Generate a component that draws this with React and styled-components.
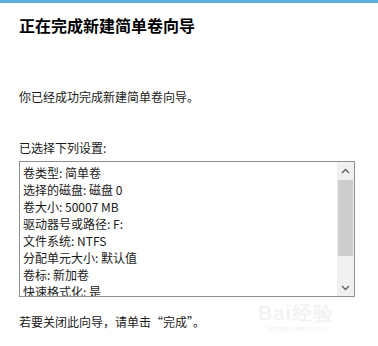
import React from "react";
import styled, { createGlobalStyle } from "styled-components";

const Global = createGlobalStyle`
  html, body { margin: 0; padding: 0; background: #fff; }
  body { font-family: "Noto Sans CJK SC", "Noto Sans", sans-serif; }
`;

const Page = styled.div`
  position: relative;
  width: 378px;
  height: 346px;
  border-top: 3px solid #5aaee2;
  box-sizing: border-box;
  padding: 12px 0 0 19px;
  overflow: hidden;
  color: #1a1a1a;
`;

const Title = styled.h1`
  margin: 0;
  font-size: 16px;
  line-height: 20px;
  font-weight: 700;
  color: #000;
`;

const Text = styled.p`
  margin: ${(p) => p.$top}px 0 0 0;
  font-size: 12px;
  line-height: 16px;
  color: #1a1a1a;
`;

const ListBox = styled.div`
  margin-top: 5px;
  width: 336px;
  height: 136px;
  box-sizing: border-box;
  border: 1px solid #8f8f8f;
  display: flex;
  background: #fff;
`;

const Lines = styled.div`
  flex: 1;
  padding: 2px 0 0 3px;
  overflow: hidden;
`;

const Line = styled.div`
  font-size: 12px;
  line-height: 17px;
  white-space: nowrap;
  color: #1a1a1a;
`;

const Scrollbar = styled.div`
  width: 17px;
  background: #f0f0f0;
  display: flex;
  flex-direction: column;
`;

const Arrow = styled.div`
  height: 17px;
  display: flex;
  align-items: center;
  justify-content: center;
`;

const Track = styled.div`
  flex: 1;
  padding: 1px 1px 0 1px;
`;

const Thumb = styled.div`
  height: 76px;
  background: #cdcdcd;
`;

const Watermark = styled.div`
  position: absolute;
  left: 258px;
  top: 299px;
  color: #f3f3f3;
  font-family: "Liberation Sans", sans-serif;
  text-align: center;
  pointer-events: none;
`;

const WmBig = styled.div`
  font-size: 20px;
  font-weight: 700;
  line-height: 22px;
  letter-spacing: 1px;
`;

const WmSmall = styled.div`
  font-size: 7px;
  line-height: 9px;
`;

const Chevron = ({ up }) => (
  <svg width="9" height="6" viewBox="0 0 9 6">
    <path
      d={up ? "M1 5 L4.5 1.5 L8 5" : "M1 1 L4.5 4.5 L8 1"}
      fill="none"
      stroke="#606060"
      strokeWidth="1.4"
    />
  </svg>
);

const items = [
  "卷类型: 简单卷",
  "选择的磁盘: 磁盘 0",
  "卷大小: 50007 MB",
  "驱动器号或路径: F:",
  "文件系统: NTFS",
  "分配单元大小: 默认值",
  "卷标: 新加卷",
  "快速格式化: 是",
];

export default function App() {
  return (
    <>
      <Global />
      <Page>
        <Title>正在完成新建简单卷向导</Title>
        <Text $top={54}>你已经成功完成新建简单卷向导。</Text>
        <Text $top={35}>已选择下列设置:</Text>
        <ListBox>
          <Lines>
            {items.map((t) => (
              <Line key={t}>{t}</Line>
            ))}
          </Lines>
          <Scrollbar>
            <Arrow>
              <Chevron up />
            </Arrow>
            <Track>
              <Thumb />
            </Track>
            <Arrow>
              <Chevron />
            </Arrow>
          </Scrollbar>
        </ListBox>
        <Text $top={17}>若要关闭此向导，请单击“完成”。</Text>
        <Watermark>
          <WmBig>Bai经验</WmBig>
          <WmSmall>jingyan.baidu.com</WmSmall>
        </Watermark>
      </Page>
    </>
  );
}
